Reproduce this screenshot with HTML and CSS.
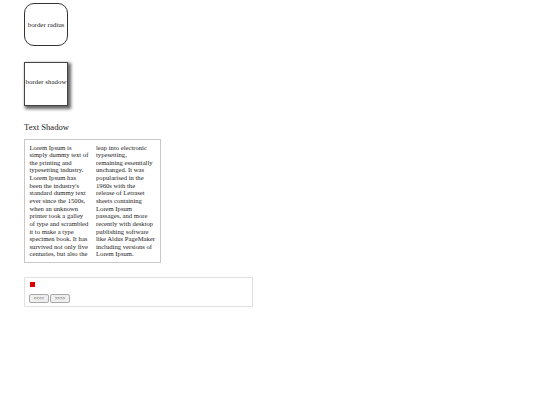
FILE: index.html
```html
<!DOCTYPE html>
<html>
<head>
<meta charset="utf-8">
<link rel="stylesheet" href="styles.css">
</head>
<body>
<div class="page">
  <div class="box radius">border radius</div>
  <div class="box shadow">border shadow</div>
  <p class="heading">Text Shadow</p>
  <div class="columns">
    <div class="col">Lorem Ipsum is<br>simply dummy text of<br>the printing and<br>typesetting industry.<br>Lorem Ipsum has<br>been the industry's<br>standard dummy text<br>ever since the 1500s,<br>when an unknown<br>printer took a galley<br>of type and scrambled<br>it to make a type<br>specimen book. It has<br>survived not only five<br>centuries, but also the</div>
    <div class="col">leap into electronic<br>typesetting,<br>remaining essentially<br>unchanged. It was<br>popularised in the<br>1960s with the<br>release of Letraset<br>sheets containing<br>Lorem Ipsum<br>passages, and more<br>recently with desktop<br>publishing software<br>like Aldus PageMaker<br>including versions of<br>Lorem Ipsum.</div>
  </div>
  <div class="panel">
    <div class="dot"></div>
    <div class="buttons">
      <button class="btn">&lt;&lt;&lt;&lt;</button>
      <button class="btn">&gt;&gt;&gt;&gt;</button>
    </div>
  </div>
</div>
</body>
</html>
```
FILE: styles.css
```css
html, body {
  margin: 0;
  padding: 0;
  background: #ffffff;
}
body {
  font-family: "Liberation Serif", "Times New Roman", serif;
  color: #222;
}
.page {
  padding: 3px 0 0 24px;
  display: flex;
  flex-direction: column;
  align-items: flex-start;
}
.box {
  width: 42px;
  height: 41px;
  border: 1px solid #333;
  display: flex;
  align-items: center;
  justify-content: center;
  font-size: 6.9px;
  white-space: nowrap;
  box-sizing: content-box;
}
.radius {
  border-radius: 10px;
}
.shadow {
  margin-top: 16px;
  border-color: #444;
  box-shadow: 2px 2px 3px 1px #666;
  line-height: 1;
  padding-bottom: 4px;
  height: 38px;
}
.heading {
  margin: 16px 0 0 0;
  font-size: 8.6px;
  line-height: 10px;
  color: #222;
}
.columns {
  margin-top: 7px;
  width: 126px;
  padding: 3.5px 4.5px 3.5px 4.5px;
  border: 1px solid #c8c8c8;
  display: grid;
  grid-template-columns: 59.5px 59.5px;
  column-gap: 7px;
  font-size: 6.65px;
  line-height: 7.64px;
  color: #222;
}
.col {
  white-space: nowrap;
}
.panel {
  margin-top: 14px;
  width: 219px;
  padding: 4px 4px 3px 4px;
  border: 1px solid #e2e2e2;
}
.dot {
  width: 5px;
  height: 5px;
  margin-left: 1px;
  background: #e00000;
}
.buttons {
  display: flex;
  gap: 1px;
  margin-top: 7px;
}
.btn {
  width: 20px;
  height: 9px;
  padding: 0;
  margin: 0;
  border: 1px solid #a8a8a8;
  border-radius: 2px;
  background: #efefef;
  font-family: "Liberation Sans", Arial, sans-serif;
  font-size: 4.5px;
  line-height: 7px;
  color: #555;
  letter-spacing: 0;
}
```
